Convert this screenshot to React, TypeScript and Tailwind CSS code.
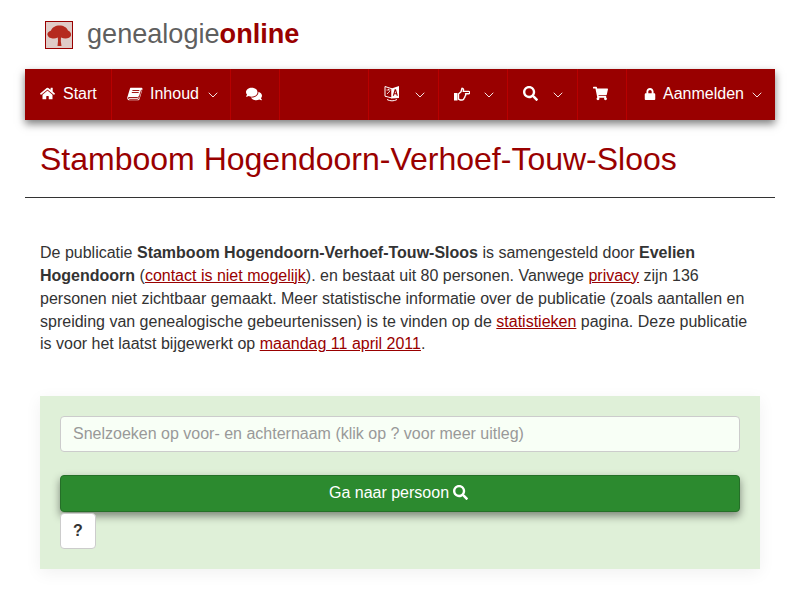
import { FaComments, FaHome, FaLock, FaSearch, FaShoppingCart } from "react-icons/fa";
import { FiChevronDown } from "react-icons/fi";
import type { ReactNode } from "react";

function NavItem({ width, children, last }: { width: string; children?: ReactNode; last?: boolean }) {
  return (
    <div className={`${width} flex h-full items-center pb-[2px] pl-[15px] ${last ? "" : "border-r border-[#b80000]"}`}>
      {children}
    </div>
  );
}

function Chevron({ className }: { className: string }) {
  return <FiChevronDown className={`mt-[2px] h-[16px] w-[16px] shrink-0 text-[#f3e3e3] ${className}`} strokeWidth={1.5} />;
}

function BookIcon() {
  return (
    <svg viewBox="0 0 16 14" className="h-[14px] w-[16px] shrink-0">
      <path fill="#fff" d="M3.500 .8H14.800L15.600 1.800 12.700 11.800C12.400 12.800 11.700 13.300 10.800 13.300H2.600C1 13.300-.2 11.800.4 10.100L3 1.600C3.100 1.200 3.300 .9 3.500 .8z" />
      <path fill="none" stroke="#990000" strokeWidth=".9" d="M5.400 3.500H12.300M4.800 5.500H11.700M14.500 2.800 11.800 11.300C11.500 12.100 11 12.300 10.300 12.300H2.900C1.800 12.300 1.200 11.500 1.600 10.500H10.500C11.200 10.500 11.500 10.100 11.700 9.500" />
    </svg>
  );
}

function LanguageIcon() {
  return (
    <svg viewBox="0 0 16 17" className="h-[17px] w-[16px] shrink-0">
      <path fill="none" stroke="#fff" strokeWidth="1" d="M1 1.500 8 3.800V13L1 11.200zM3 14.500C6 16.300 10 16.300 13 14.500" />
      <path fill="#fff" d="M7.500 3.500 15 1V13L7.500 13.600z" />
      <path fill="#990000" d="M10.700 4.300H12L13.900 10.800H12.700L12.300 9.300H10.400L10 10.800H8.800zM11.300 5.900 10.700 8.200H12z" />
      <path fill="none" stroke="#fff" strokeWidth=".8" d="M2.500 5H6.500M4.500 3.800V5M3 9 6 6" />
    </svg>
  );
}

function PointerIcon() {
  return (
    <svg viewBox="0 0 16 14" className="h-[14px] w-[16px] shrink-0">
      <rect x="0" y="6" width="3.500" height="7.500" fill="#fff" />
      <path fill="none" stroke="#fff" strokeWidth="1.400" strokeLinejoin="round" d="M4.500 7 7 4.800 8 1.200C9.500 1.200 9.900 3 9.200 4.400H14.700C16.100 4.400 16.100 6.800 14.700 6.800H11.500C12 7.800 11.600 8.800 11 9.300 11 10.300 10.700 10.900 10 11.300 10 12.400 9.200 13 8.200 13H6.300L4.500 12.200z" />
    </svg>
  );
}

function TreeLogo() {
  return (
    <div className="flex h-[28px] w-[28px] shrink-0 items-center justify-center border border-[#990000] bg-[#e0ccc8]">
      <svg viewBox="0 0 26 26" className="h-[26px] w-[26px]">
        <path fill="#b52a1e" d="M1.500 13C1 10.500 3 9.500 5 8.500 6 5.500 9.500 3.500 13.500 3.500S21 5.500 22 8.500C24 9.500 25.500 11 25 13.500 24.500 15.500 22 16.500 19.500 16.500 18 16.500 16.500 16 15 15.500L14.800 19 15.500 24H11.500L12 19 11.800 15.500C10 16.500 8.500 16.800 6.500 16.500 4 16.200 2 15 1.500 13z" />
      </svg>
    </div>
  );
}

export default function App() {
  return (
    <div className="min-h-[600px] bg-white font-['Liberation_Sans',Arial,sans-serif] text-[16px] leading-[24px] text-[#333333]">
      <header className="flex h-[69px] items-center gap-[14px] pl-[45px]">
        <TreeLogo />
        <div className="mb-[2px] text-[27.1px] leading-[30px] text-[#5f5f5f]">
          genealogie<span className="font-bold text-[#990000]">online</span>
        </div>
      </header>

      <div className="mx-[25px]">
        <nav className="flex h-[51px] items-center bg-[#990000] text-white shadow-[0_4px_8px_rgba(0,0,0,0.5)]">
          <NavItem width="w-[87px]">
            <FaHome className="h-[15px] w-[15px]" />
            <span className="ml-[8px]">Start</span>
          </NavItem>
          <NavItem width="w-[119px]">
            <BookIcon />
            <span className="ml-[7px]">Inhoud</span>
            <Chevron className="ml-[6px]" />
          </NavItem>
          <NavItem width="w-[49px]">
            <FaComments className="h-[16px] w-[16px]" />
          </NavItem>
          <NavItem width="w-[89px]" />
          <NavItem width="w-[70px]">
            <LanguageIcon />
            <Chevron className="ml-[12px]" />
          </NavItem>
          <NavItem width="w-[69px]">
            <PointerIcon />
            <Chevron className="ml-[11px]" />
          </NavItem>
          <NavItem width="w-[70px]">
            <FaSearch className="h-[15px] w-[15px]" />
            <Chevron className="ml-[12px]" />
          </NavItem>
          <NavItem width="w-[49px]">
            <FaShoppingCart className="h-[15px] w-[15px]" />
          </NavItem>
          <NavItem width="flex-1" last>
            <FaLock className="ml-[2px] h-[12px] w-[12px]" />
            <span className="ml-[7px]">Aanmelden</span>
            <Chevron className="ml-[5px]" />
          </NavItem>
        </nav>

        <h1 className="border-b border-[#333333] px-[15px] pt-[20px] pb-[19px] text-[32px] leading-[38px] text-[#990000]">
          Stamboom Hogendoorn-Verhoef-Touw-Sloos
        </h1>

        <div className="mx-[15px]">
          <p className="pt-[44px] pb-[40px] text-[16px] leading-[22.857px]">
            De publicatie <strong>Stamboom Hogendoorn-Verhoef-Touw-Sloos</strong> is samengesteld door{" "}
            <strong>Evelien Hogendoorn</strong> (<a className="text-[#990000] underline">contact is niet mogelijk</a>). en bestaat
            uit 80 personen. Vanwege <a className="text-[#990000] underline">privacy</a> zijn 136 personen niet zichtbaar gemaakt.
            Meer statistische informatie over de publicatie (zoals aantallen en spreiding van genealogische gebeurtenissen) is te
            vinden op de <a className="text-[#990000] underline">statistieken</a> pagina. Deze publicatie is voor het laatst
            bijgewerkt op <a className="text-[#990000] underline">maandag 11 april 2011</a>.
          </p>

          <section className="h-[173px] bg-[#dff0d8] px-[20px] pt-[20px] shadow-[0_4px_16px_rgba(0,0,0,0.06)]">
            <div className="flex h-[36px] items-center rounded-[4px] border border-[#cccccc] bg-[#f8fff6] px-[12px] text-[#999999]">
              Snelzoeken op voor- en achternaam (klik op ? voor meer uitleg)
            </div>
            <div className="mt-[23px] flex h-[37px] items-center justify-center gap-[4px] rounded-[4px] border border-[#256f28] bg-[#2c8a2f] pr-[3px] pb-[2px] text-white shadow-[0_4px_8px_rgba(0,0,0,0.45)]">
              Ga naar persoon
              <FaSearch className="h-[15px] w-[15px]" />
            </div>
            <div className="mt-px flex h-[36px] w-[36px] items-center justify-center rounded-[4px] border border-[#cccccc] bg-white font-bold">
              ?
            </div>
          </section>
        </div>
      </div>
    </div>
  );
}
